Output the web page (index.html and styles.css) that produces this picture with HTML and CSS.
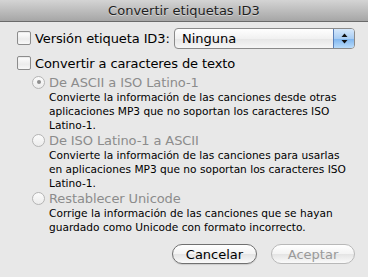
FILE: index.html
```html
<!DOCTYPE html>
<html lang="es">
<head>
<meta charset="utf-8">
<title>Convertir etiquetas ID3</title>
<link rel="stylesheet" href="styles.css">
</head>
<body>
<div class="window">
  <div class="titlebar">Convertir etiquetas ID3</div>
  <div class="content">
    <div class="row version-row">
      <span class="checkbox"></span>
      <span class="label">Versión etiqueta ID3:</span>
      <div class="popup">
        <span class="popup-text">Ninguna</span>
        <span class="popup-arrows">
          <svg width="7" height="11" viewBox="0 0 7 11"><path d="M3.5 0.5 L6.5 4 L0.5 4 Z" fill="#111"/><path d="M0.5 7 L6.5 7 L3.5 10.5 Z" fill="#111"/></svg>
        </span>
      </div>
    </div>
    <div class="row convert-row">
      <span class="checkbox"></span>
      <span class="label">Convertir a caracteres de texto</span>
    </div>
    <div class="options">
      <div class="option">
        <div class="radio-row"><span class="radio checked"></span><span class="radio-label">De ASCII a ISO Latino-1</span></div>
        <p class="desc">Convierte la información de las canciones desde otras<br>aplicaciones MP3 que no soportan los caracteres ISO<br>Latino-1.</p>
      </div>
      <div class="option">
        <div class="radio-row"><span class="radio"></span><span class="radio-label">De ISO Latino-1 a ASCII</span></div>
        <p class="desc">Convierte la información de las canciones para usarlas<br>en aplicaciones MP3 que no soportan los caracteres ISO<br>Latino-1.</p>
      </div>
      <div class="option">
        <div class="radio-row"><span class="radio"></span><span class="radio-label">Restablecer Unicode</span></div>
        <p class="desc">Corrige la información de las canciones que se hayan<br>guardado como Unicode con formato incorrecto.</p>
      </div>
    </div>
    <div class="buttons">
      <button class="btn">Cancelar</button>
      <button class="btn disabled">Aceptar</button>
    </div>
  </div>
</div>
</body>
</html>
```
FILE: styles.css
```css
html, body {
  margin: 0;
  padding: 0;
  background: #e8e8e8;
}
.window {
  width: 368px;
  height: 277px;
  font-family: "DejaVu Sans", sans-serif;
  color: #000;
  background: #e8e8e8;
  display: flex;
  flex-direction: column;
}
.titlebar {
  height: 21px;
  line-height: 21px;
  border-bottom: 1px solid #6a6a6a;
  background: linear-gradient(#d4d4d4, #a6a6a6);
  text-align: center;
  font-size: 13px;
  color: #1e1e1e;
  text-shadow: 0 1px 0 rgba(255,255,255,0.45);
}
.content {
  padding: 5px 13px 0 17px;
  display: flex;
  flex-direction: column;
}
.row {
  display: flex;
  align-items: center;
  font-size: 13px;
  white-space: nowrap;
}
.version-row {
  height: 22px;
}
.convert-row {
  height: 16px;
  margin-top: 6px;
}
.checkbox {
  width: 12px;
  height: 12px;
  border: 1px solid #8c8c8c;
  border-radius: 2px;
  background: linear-gradient(#ffffff, #ececec 60%, #f8f8f8);
  box-shadow: inset 0 1px 1px rgba(0,0,0,0.08);
  flex: none;
}
.label {
  margin-left: 4px;
  letter-spacing: -0.1px;
}
.popup {
  margin-left: auto;
  width: 179px;
  height: 19px;
  border: 1px solid #8a8a8a;
  border-radius: 4px;
  background: linear-gradient(#ffffff, #f1f1f1 50%, #e6e6e6 51%, #f6f6f6);
  display: flex;
  align-items: center;
  overflow: hidden;
}
.popup-text {
  flex: 1;
  padding-left: 7px;
}
.popup-arrows {
  width: 20px;
  height: 19px;
  border-left: 1px solid #5a7fb8;
  background: linear-gradient(#d6e8fb, #a9cdf3 50%, #7db4ee 51%, #b9dcfb);
  display: flex;
  align-items: center;
  justify-content: center;
}
.options {
  margin-top: 3px;
  padding-left: 15px;
  display: flex;
  flex-direction: column;
}
.radio-row {
  height: 16px;
  display: flex;
  align-items: center;
  white-space: nowrap;
}
.radio {
  width: 11px;
  height: 11px;
  border: 1px solid #b4b4b4;
  border-radius: 50%;
  background: linear-gradient(#fbfbfb, #ececec);
  position: relative;
  flex: none;
}
.radio.checked::after {
  content: "";
  position: absolute;
  left: 3.5px;
  top: 3.5px;
  width: 4px;
  height: 4px;
  border-radius: 50%;
  background: #8e8e8e;
}
.radio-label {
  margin-left: 4px;
  font-size: 13px;
  color: #8c8c8c;
  letter-spacing: -0.1px;
}
.desc {
  margin: 0 0 0 17px;
  font-size: 10.6px;
  line-height: 14px;
  white-space: nowrap;
}
.buttons {
  margin-top: 10px;
  display: flex;
  justify-content: flex-end;
  gap: 14px;
}
.btn {
  width: 85px;
  height: 20px;
  padding: 0;
  border: 1px solid #707070;
  border-radius: 10px;
  background: linear-gradient(#ffffff, #f3f3f3 50%, #e4e4e4 51%, #fafafa);
  font-family: "DejaVu Sans", sans-serif;
  font-size: 13px;
  color: #000;
  box-shadow: 0 1px 1px rgba(0,0,0,0.12);
}
.btn.disabled {
  width: 84px;
  border-color: #b8b8b8;
  color: #9a9a9a;
  box-shadow: none;
}
```
